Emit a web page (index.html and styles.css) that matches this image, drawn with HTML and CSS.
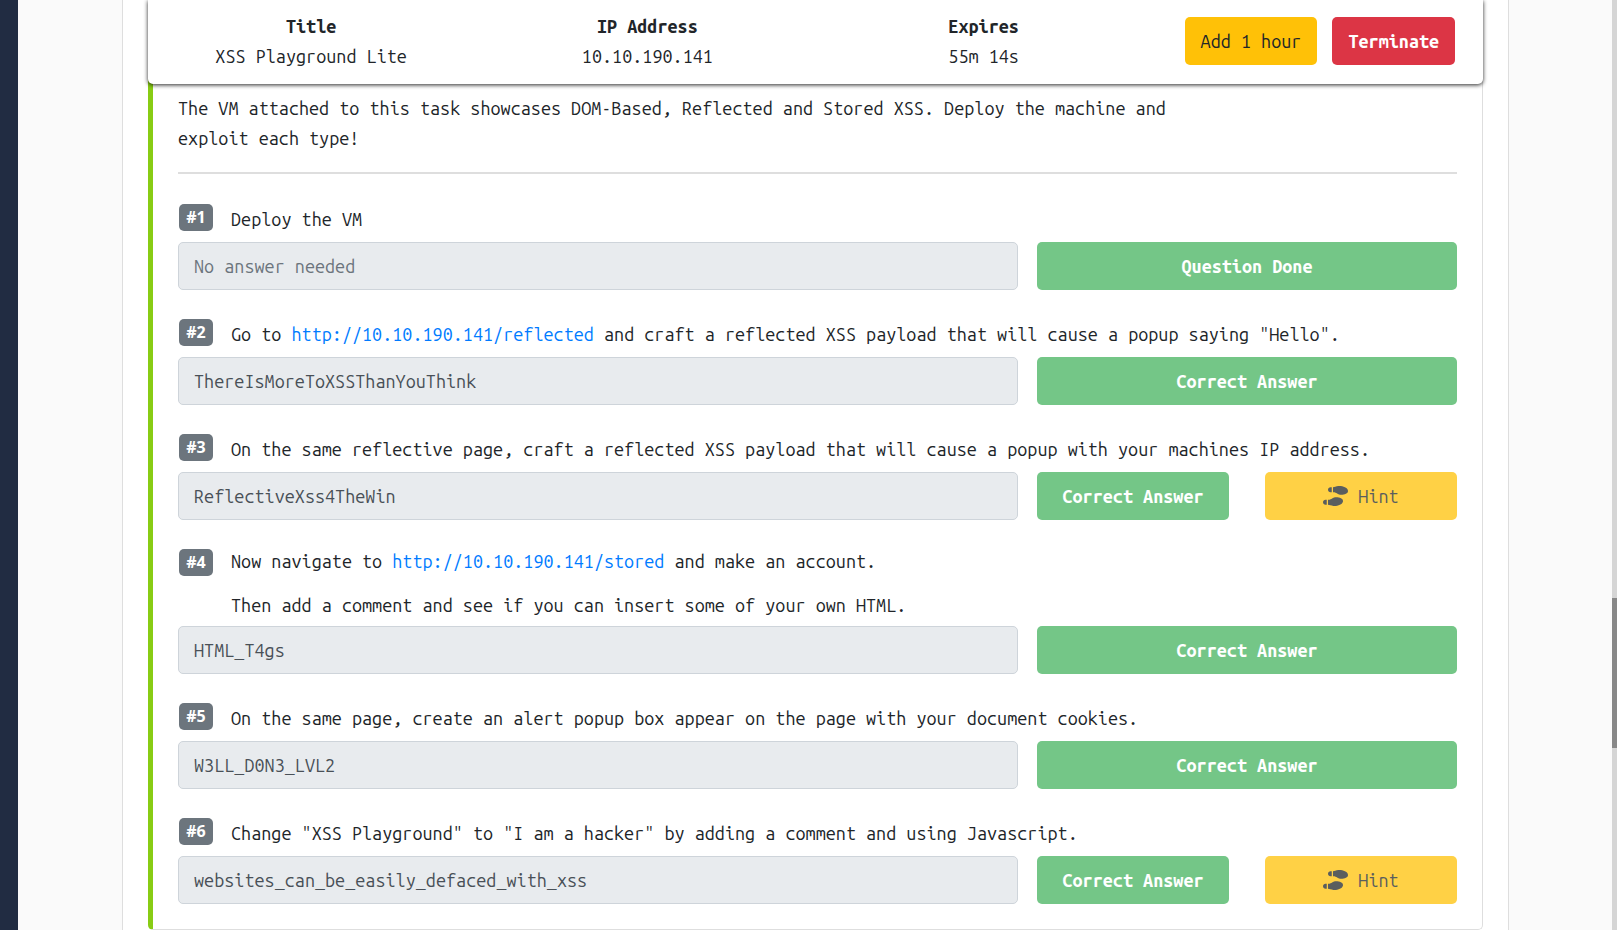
FILE: index.html
```html
<!DOCTYPE html>
<html lang="en">
<head>
<meta charset="utf-8">
<title>XSS Playground</title>
<link rel="stylesheet" href="styles.css">
</head>
<body>
<svg class="sprite" aria-hidden="true">
  <symbol id="shoe-prints" viewBox="0 0 640 512">
    <path d="M192 160h32V32h-32c-35.35 0-64 28.65-64 64s28.65 64 64 64zM0 416c0 35.35 28.65 64 64 64h32V352H64c-35.35 0-64 28.65-64 64zm337.46-128c-34.91 0-76.16 13.12-104.73 32-24.79 16.38-44.52 32-104.73 32v128l57.53 15.97c26.21 7.28 53.01 13.12 80.31 15.05 32.69 2.31 65.6.67 97.58-6.2C472.9 481.3 512 429.22 512 384c0-64-84.18-96-174.54-96zM491.42 7.25C459.44.32 426.53-1.33 393.84.99c-27.3 1.93-54.1 7.77-80.31 15.04L256 32v128c60.2 0 79.94 15.62 104.73 32 28.57 18.88 69.82 32 104.73 32C555.82 224 640 192 640 128c0-45.22-39.1-97.3-148.58-120.75z"/>
  </symbol>
</svg>
<div class="page">
  <div class="sidebar"></div>
  <main class="content">
    <div class="panel">
      <header class="machine">
        <div class="machine-row">
          <div class="machine-info"><strong>Title</strong><span>XSS Playground Lite</span></div>
          <div class="machine-info"><strong>IP Address</strong><span>10.10.190.141</span></div>
          <div class="machine-info"><strong>Expires</strong><span>55m 14s</span></div>
          <div class="machine-actions">
            <button class="btn btn-extend" type="button">Add 1 hour</button>
            <button class="btn btn-terminate" type="button">Terminate</button>
          </div>
        </div>
      </header>

      <section class="task">
        <p class="intro">The VM attached to this task showcases DOM-Based, Reflected and Stored XSS. Deploy the machine and exploit each type!</p>
        <hr class="divider">

        <div class="questions">
          <div class="question">
            <div class="prompt"><span class="badge">#1</span><label for="q1">Deploy the VM</label></div>
            <div class="answer">
              <input id="q1" class="field" type="text" placeholder="No answer needed" readonly>
              <div class="actions"><button class="btn btn-done" type="button">Question Done</button></div>
            </div>
          </div>

          <div class="question">
            <div class="prompt"><span class="badge">#2</span><label for="q2">Go to <a href="#reflected">http://10.10.190.141/reflected</a> and craft a reflected XSS payload that will cause a popup saying "Hello".</label></div>
            <div class="answer">
              <input id="q2" class="field" type="text" value="ThereIsMoreToXSSThanYouThink" readonly>
              <div class="actions"><button class="btn btn-done" type="button">Correct Answer</button></div>
            </div>
          </div>

          <div class="question">
            <div class="prompt"><span class="badge">#3</span><label for="q3">On the same reflective page, craft a reflected XSS payload that will cause a popup with your machines IP address.</label></div>
            <div class="answer">
              <input id="q3" class="field" type="text" value="ReflectiveXss4TheWin" readonly>
              <div class="actions">
                <button class="btn btn-done" type="button">Correct Answer</button>
                <button class="btn btn-hint" type="button"><svg class="icon" aria-hidden="true"><use href="#shoe-prints"/></svg>Hint</button>
              </div>
            </div>
          </div>

          <div class="question question-long">
            <div class="prompt"><span class="badge">#4</span><label for="q4"><span>Now navigate to <a href="#stored">http://10.10.190.141/stored</a> and make an account.</span><span>Then add a comment and see if you can insert some of your own HTML.</span></label></div>
            <div class="answer">
              <input id="q4" class="field" type="text" value="HTML_T4gs" readonly>
              <div class="actions"><button class="btn btn-done" type="button">Correct Answer</button></div>
            </div>
          </div>

          <div class="question">
            <div class="prompt"><span class="badge">#5</span><label for="q5">On the same page, create an alert popup box appear on the page with your document cookies.</label></div>
            <div class="answer">
              <input id="q5" class="field" type="text" value="W3LL_D0N3_LVL2" readonly>
              <div class="actions"><button class="btn btn-done" type="button">Correct Answer</button></div>
            </div>
          </div>

          <div class="question">
            <div class="prompt"><span class="badge">#6</span><label for="q6">Change "XSS Playground" to "I am a hacker" by adding a comment and using Javascript.</label></div>
            <div class="answer">
              <input id="q6" class="field" type="text" value="websites_can_be_easily_defaced_with_xss" readonly>
              <div class="actions">
                <button class="btn btn-done" type="button">Correct Answer</button>
                <button class="btn btn-hint" type="button"><svg class="icon" aria-hidden="true"><use href="#shoe-prints"/></svg>Hint</button>
              </div>
            </div>
          </div>
        </div>
      </section>
    </div>
  </main>
  <div class="scroll-track"><div class="scroll-thumb"></div></div>
</div>
</body>
</html>
```
FILE: styles.css
```css
*,
*::before,
*::after {
  box-sizing: border-box;
}

body {
  margin: 0;
  background: #fafafa;
  color: #212529;
  font-family: "Ubuntu Mono", "DejaVu Sans Mono", monospace;
  font-size: 18px;
  line-height: 30px;
}

.sprite {
  display: none;
}

.page {
  display: flex;
  min-height: 100vh;
}

.sidebar {
  flex: 0 0 18px;
  background: #212c42;
}

.content {
  display: flex;
  flex: 1;
  min-width: 0;
  padding: 0 103px 0 104px;
}

.panel {
  flex: 1;
  min-width: 0;
  padding: 0 25px;
  background: #fff;
  border: solid #dedede;
  border-width: 0 1px;
}

.machine {
  position: relative;
  z-index: 1;
  padding: 11px 0 13px;
  background: #fff;
  border-radius: 0 0 5px 5px;
  box-shadow: 0 1px 4px rgba(0, 0, 0, 0.85);
}

.machine-row {
  display: grid;
  grid-template-columns: repeat(4, 1fr);
  align-items: center;
  margin: 0 -5px;
}

.machine-info {
  display: flex;
  flex-direction: column;
  align-items: center;
}

.machine-actions {
  display: flex;
  justify-content: center;
  gap: 15px;
}

.btn {
  display: flex;
  align-items: center;
  justify-content: center;
  gap: 10px;
  height: 48px;
  padding: 0 16px;
  border: 0;
  border-radius: 5px;
  color: #fff;
  font: inherit;
  font-weight: bold;
  white-space: nowrap;
  cursor: pointer;
}

.btn-extend {
  background: #ffc107;
  color: #212529;
  font-weight: normal;
}

.btn-terminate {
  background: #dc3545;
}

.btn-done {
  background: #74c687;
}

.btn-hint {
  background: #ffd145;
  color: #5a5e5e;
  font-weight: normal;
}

.icon {
  width: 25px;
  height: 20px;
  fill: currentColor;
}

.task {
  margin-top: -6px;
  padding: 15px 25px 25px;
  border: 1px solid #dedede;
  border-top: 0;
  border-left: 5px solid #88cc14;
  border-radius: 0 0 5px 5px;
}

.intro {
  width: 80%;
  margin: 0;
}

.divider {
  height: 2px;
  margin: 19px 0 30px;
  border: 0;
  background: #dedede;
}

.questions {
  display: flex;
  flex-direction: column;
  gap: 29px;
}

.prompt {
  display: flex;
  align-items: flex-start;
  gap: 18px;
  padding-left: 1px;
  margin-bottom: 8px;
}

.badge {
  flex: 0 0 34px;
  border-radius: 5px;
  background: #6c757d;
  color: #fff;
  font-family: "Noto Sans", sans-serif;
  font-size: 16px;
  font-weight: bold;
  line-height: 27px;
  text-align: center;
}

.question-long {
  margin-top: -3px;
}

.question-long .prompt {
  margin-bottom: 6px;
}

.question-long .badge {
  margin-top: 3px;
}

.question-long label {
  display: grid;
  gap: 14px;
}

a {
  color: #007bff;
  text-decoration: none;
}

.answer {
  display: grid;
  grid-template-columns: 2fr 1fr;
  gap: 19px;
}

.field {
  width: 100%;
  min-width: 0;
  height: 48px;
  padding: 0 15px;
  border: 1px solid #ced4da;
  border-radius: 5px;
  background: #e8ebee;
  color: #495057;
  font: inherit;
}

.field::placeholder {
  color: #6c757d;
  opacity: 1;
}

.actions {
  display: flex;
  flex: 1;
  gap: 36px;
}

.actions .btn {
  flex: 1 1 0;
}

.scroll-track {
  flex: 0 0 5px;
  padding-top: 598px;
  background: #d5d5d5;
}

.scroll-thumb {
  height: 150px;
  background: #888;
}
```
